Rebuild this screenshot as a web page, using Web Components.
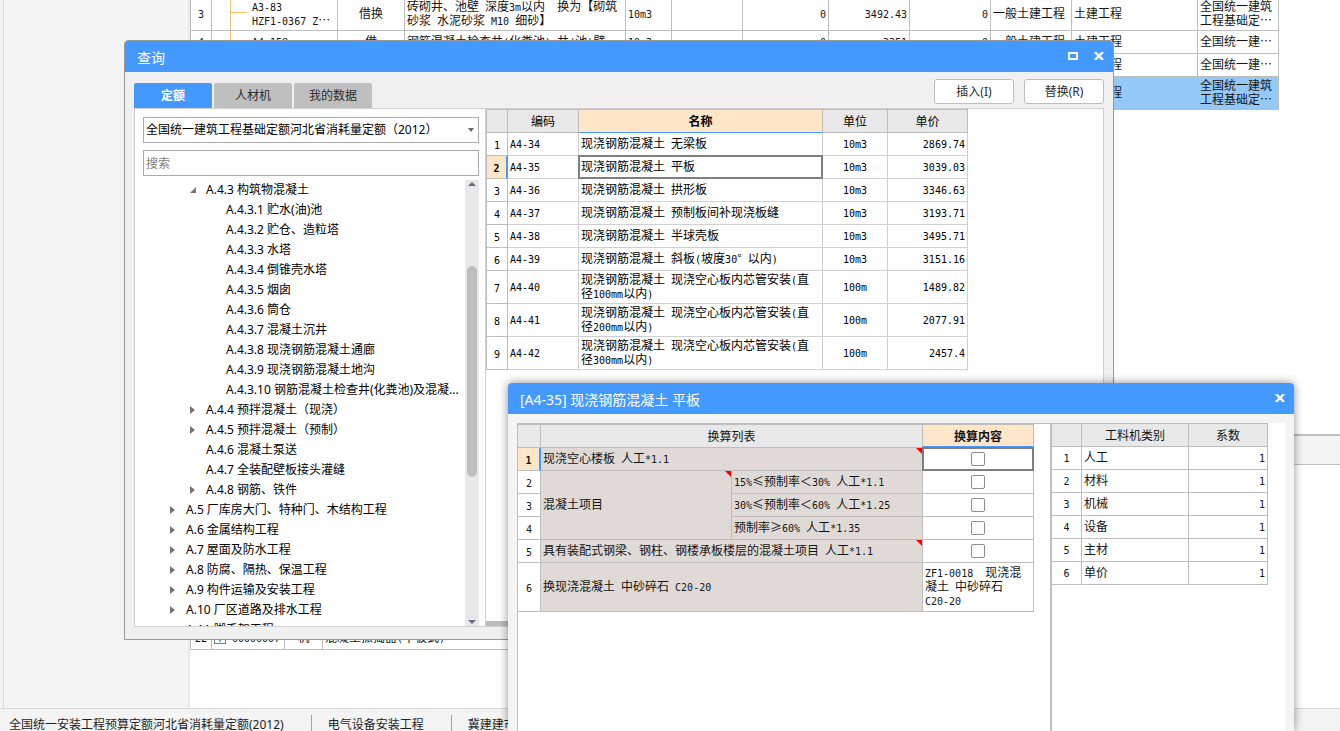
<!DOCTYPE html>
<html lang="zh-CN">
<head>
<meta charset="utf-8">
<title>查询</title>
<style>
html,body{margin:0;height:100%;overflow:hidden}
body{font:12px/14px "Noto Sans","Noto Sans CJK SC",sans-serif;color:#1e1e1e;text-spacing-trim:space-all;background:#fff}
cost-workspace{height:100%}
.query{inset:40px 226px 91px 124px}
.convert{inset:383px 46px 0 508px}
</style>
</head>
<body>

<template id="sheet-main">
<table>
<colgroup><col style="width:21px"><col style="width:126px"><col style="width:67px"><col style="width:221px"><col style="width:46px"><col style="width:71px"><col style="width:86px"><col style="width:81px"><col style="width:81px"><col style="width:81px"><col style="width:126px"><col style="width:81px"></colgroup>
<tr class="h2"><td class="c">3</td><td class="branch leaf">A3-83
HZF1-0367 Z…</td><td class="c">借换</td><td>砖砌井、池壁 深度3m以内  换为【砌筑
砂浆 水泥砂浆 M10 细砂】</td><td>10m3</td><td></td><td class="r">0</td><td class="r">3492.43</td><td class="r">0</td><td>一般土建工程</td><td>土建工程</td><td>全国统一建筑
工程基础定…</td></tr>
<tr><td class="c">4</td><td class="branch">A4-158</td><td class="c">借</td><td>钢筋混凝土检查井(化粪池) 井(池)壁</td><td>10m3</td><td></td><td class="r">0</td><td class="r">3351</td><td class="r">0</td><td>一般土建工程</td><td>土建工程</td><td>全国统一建…</td></tr>
<tr><td class="c"></td><td></td><td></td><td></td><td></td><td></td><td></td><td></td><td></td><td></td><td>土建工程</td><td>全国统一建…</td></tr>
<tr class="h2 picked"><td class="c"></td><td></td><td></td><td></td><td></td><td></td><td></td><td></td><td></td><td></td><td>土建工程</td><td>全国统一建筑
工程基础定…</td></tr>
</table>
</template>

<template id="sheet-detail">
<table>
<colgroup><col style="width:21px"><col style="width:73px"><col style="width:38px"><col style="width:956px"></colgroup>
<tr><td class="c">22</td><td><span class="plus">+</span>00000007</td><td class="c">机</td><td>混凝土振捣器(平板式)</td></tr>
</table>
</template>

<template id="sheet-quota">
<table class="soft">
<colgroup><col style="width:21px"><col style="width:71px"><col style="width:244px"><col style="width:65px"><col style="width:80px"></colgroup>
<tr><th></th><th>编码</th><th class="on thin">名称</th><th>单位</th><th>单价</th></tr>
<tr><td class="n">1</td><td>A4-34</td><td>现浇钢筋混凝土 无梁板</td><td class="c">10m3</td><td class="r">2869.74</td></tr>
<tr><td class="n cur">2</td><td>A4-35</td><td class="focus">现浇钢筋混凝土 平板</td><td class="c">10m3</td><td class="r">3039.03</td></tr>
<tr><td class="n">3</td><td>A4-36</td><td>现浇钢筋混凝土 拱形板</td><td class="c">10m3</td><td class="r">3346.63</td></tr>
<tr><td class="n">4</td><td>A4-37</td><td>现浇钢筋混凝土 预制板间补现浇板缝</td><td class="c">10m3</td><td class="r">3193.71</td></tr>
<tr><td class="n">5</td><td>A4-38</td><td>现浇钢筋混凝土 半球壳板</td><td class="c">10m3</td><td class="r">3495.71</td></tr>
<tr><td class="n">6</td><td>A4-39</td><td>现浇钢筋混凝土 斜板(坡度30° 以内)</td><td class="c">10m3</td><td class="r">3151.16</td></tr>
<tr class="h2"><td class="n">7</td><td>A4-40</td><td>现浇钢筋混凝土 现浇空心板内芯管安装(直
径100mm以内)</td><td class="c">100m</td><td class="r">1489.82</td></tr>
<tr class="h2"><td class="n">8</td><td>A4-41</td><td>现浇钢筋混凝土 现浇空心板内芯管安装(直
径200mm以内)</td><td class="c">100m</td><td class="r">2077.91</td></tr>
<tr class="h2"><td class="n">9</td><td>A4-42</td><td>现浇钢筋混凝土 现浇空心板内芯管安装(直
径300mm以内)</td><td class="c">100m</td><td class="r">2457.4</td></tr>
</table>
</template>

<template id="sheet-convert">
<table>
<colgroup><col style="width:23px"><col style="width:191px"><col style="width:191px"><col style="width:111px"></colgroup>
<tr><th></th><th colspan="2">换算列表</th><th class="on">换算内容</th></tr>
<tr><td class="n cur">1</td><td colspan="2" class="g flag">现浇空心楼板 人工*1.1</td><td class="n focus"><input type="checkbox" aria-label="现浇空心楼板"></td></tr>
<tr><td class="n">2</td><td rowspan="3" class="g flag">混凝土项目</td><td class="g">15%≤预制率＜30% 人工*1.1</td><td class="n"><input type="checkbox" aria-label="15%≤预制率＜30%"></td></tr>
<tr><td class="n">3</td><td class="g">30%≤预制率＜60% 人工*1.25</td><td class="n"><input type="checkbox" aria-label="30%≤预制率＜60%"></td></tr>
<tr><td class="n">4</td><td class="g">预制率≥60% 人工*1.35</td><td class="n"><input type="checkbox" aria-label="预制率≥60%"></td></tr>
<tr><td class="n">5</td><td colspan="2" class="g flag">具有装配式钢梁、钢柱、钢楼承板楼层的混凝土项目 人工*1.1</td><td class="n"><input type="checkbox" aria-label="具有装配式钢梁"></td></tr>
<tr class="h3"><td class="n">6</td><td colspan="2" class="g">换现浇混凝土 中砂碎石 C20-20</td><td>ZF1-0018  现浇混
凝土 中砂碎石
C20-20</td></tr>
</table>
</template>

<template id="sheet-factor">
<table>
<colgroup><col style="width:30px"><col style="width:107px"><col style="width:79px"></colgroup>
<tr><th></th><th>工料机类别</th><th>系数</th></tr>
<tr><td class="c">1</td><td>人工</td><td class="r">1</td></tr>
<tr><td class="c">2</td><td>材料</td><td class="r">1</td></tr>
<tr><td class="c">3</td><td>机械</td><td class="r">1</td></tr>
<tr><td class="c">4</td><td>设备</td><td class="r">1</td></tr>
<tr><td class="c">5</td><td>主材</td><td class="r">1</td></tr>
<tr><td class="c">6</td><td>单价</td><td class="r">1</td></tr>
</table>
</template>

<cost-workspace>
  <data-grid slot="upper" sheet="sheet-main"></data-grid>
  <data-grid slot="lower" sheet="sheet-detail"></data-grid>
  <status-bar slot="status"></status-bar>
</cost-workspace>

<tool-window class="query" heading="查询" maximizable framed>
  <query-panel></query-panel>
</tool-window>

<tool-window class="convert" heading="[A4-35] 现浇钢筋混凝土 平板">
  <convert-panel></convert-panel>
</tool-window>

<script>
class Part extends HTMLElement{
  connectedCallback(){
    if(this.shadowRoot) return;
    this.attachShadow({mode:'open'}).innerHTML=this.view();
    this.ready&&this.ready();
  }
}

customElements.define('cost-workspace',class extends Part{
  view(){return `<style>
:host{display:flex;flex-direction:column;overflow:hidden}
.top{flex:1;display:flex;min-height:0}
.edge{width:3px;background:#f4f4f4;border-right:1px solid #d9d9d9}
aside{width:184px;background:#f4f4f4;border-right:2px solid #e9e9e9;flex:none}
main{flex:1;min-width:0;display:flex;flex-direction:column}
.upper,.lower{overflow:hidden;min-height:0}
.upper{flex:433 1 0}
main ::slotted(*){border-left:1px solid #bebebe}
.upper ::slotted(*){margin-top:-2px}
.bar{height:28px;background:#f4f4f4;border-top:2px solid #bebebe;border-bottom:1px solid #bebebe}
.lower{flex:243 1 0;display:flex;flex-direction:column;justify-content:flex-end}
.lower ::slotted(*){margin-bottom:58px}
</style><div class="top"><div class="edge"></div><aside></aside><main><section class="upper"><slot name="upper"></slot></section><div class="bar"></div><section class="lower"><slot name="lower"></slot></section></main></div><slot name="status"></slot>`}
});

customElements.define('status-bar',class extends Part{
  view(){return `<style>
:host{display:block;height:22px;background:#f4f4f4;border-top:1px solid #d9d9d9;overflow:hidden;flex:none}
footer{display:flex;padding:6px 0 0 9px;white-space:nowrap}
span{line-height:14px;padding:3px 27px 0 0;margin-right:16px;border-right:1px solid #9aa3b2}
span:last-child{border:0}
</style><footer><span>全国统一安装工程预算定额河北省消耗量定额(2012)</span><span>电气设备安装工程</span><span>冀建建市</span></footer>`}
});

customElements.define('data-grid',class extends Part{
  view(){return `<style>
:host{display:block;--line:#bebebe}
table{border-collapse:separate;border-spacing:0;table-layout:fixed;width:0;color:#141414;font-family:"Noto Sans CJK SC",sans-serif;white-space:pre}
tr{height:23px}.h2{height:33px}.h3{height:49px}
td,th{box-sizing:border-box;padding:0 2px;border:0 solid var(--line);border-width:0 1px 1px 0;text-align:left;position:relative;overflow:hidden;font-weight:400;line-height:14px}
td{padding-bottom:2px}
td:first-child,th:first-child{border-color:#bebebe}
.soft{--line:#d0d0d0;color:#000}
th{background:#e8e8e8;text-align:center;border-color:#bebebe}
th.on{background:#ffe6c8;font-weight:700;border-bottom:2px solid #4499ff}
th.thin{border-bottom-width:1px}
.c{text-align:center;padding:0 0 2px}.n{text-align:center;padding:0}.r{text-align:right}
.cur{background:#ffe6c8;font-weight:700;border-right:2px solid #4499ff!important}
.focus{overflow:visible}
.focus::after{content:"";position:absolute;inset:-1px;border:2px solid #7f7f7f;pointer-events:none}
.g{background:#e0dad7}
.flag::after{content:"";position:absolute;top:0;right:0;border:3px solid red;border-left-color:transparent;border-bottom-color:transparent}
.picked td{background:#93c8f7}
td.branch{padding-left:40px}
.branch::before{content:"";position:absolute;left:18px;top:0;bottom:0;border-left:1px solid #f8c070}
.leaf::after{content:"";position:absolute;left:19px;top:14px;width:16px;border-top:1px solid #f8c070}
.plus{display:inline-block;box-sizing:border-box;width:12px;height:12px;border:1px solid #7f7f7f;line-height:10px;margin-right:6px;text-align:center;vertical-align:middle}
.half{font-family:"DejaVu Sans Mono",monospace;font-size:10px;line-height:10px}
input{appearance:none;display:block;width:14px;height:14px;box-sizing:border-box;margin:0 auto;border:1px solid #8c8c8c;border-radius:2px;background:#fff}
</style>`}
  ready(){
    const body=document.getElementById(this.getAttribute('sheet')).content.cloneNode(true);
    const walk=document.createTreeWalker(body,NodeFilter.SHOW_TEXT),found=[];
    while(walk.nextNode()) if(walk.currentNode.parentElement?.closest('td')) found.push(walk.currentNode);
    for(const node of found){
      const parts=node.data.split(/([\x20-\x7e]+)/).filter(Boolean).map(s=>{
        if(!/^[\x20-\x7e]+$/.test(s)) return s;
        const e=document.createElement('span');e.className='half';e.textContent=s;return e;
      });
      node.replaceWith(...parts);
    }
    this.shadowRoot.append(body);
  }
});

customElements.define('tool-window',class extends Part{
  view(){return `<style>
:host{position:absolute;display:flex;flex-direction:column;border-radius:4px 4px 0 0;overflow:hidden;background:#f4f4f4;box-shadow:0 0 10px rgba(0,0,0,.45)}
:host([framed]){border:1px solid #999;background:#f0f0f0;box-shadow:none}
header{display:flex;align-items:center;height:31px;flex:none;background:#4499ff;color:#fff;padding:0 9px 0 12px;gap:16px}
h2{font-size:14px;line-height:20px;font-weight:400;margin:2px auto 0 0}
button{border:0;background:none;padding:0 0 1px;width:10px;height:9px;display:block;color:inherit}
svg{display:block}
</style><header><h2>${this.getAttribute('heading')}</h2>
${this.hasAttribute('maximizable')?'<button aria-label="最大化"><svg width="10" height="8" fill="none" stroke="currentColor" stroke-width="2"><path d="M1 1H9V7H1Z"/></svg></button>':''}
<button aria-label="关闭"><svg width="10" height="8" fill="none" stroke="currentColor" stroke-width="2.4"><path d="M1 0L9 8M9 0L1 8"/></svg></button></header><slot></slot>`}
});

const TREE=[[2,'open','A.4.3 构筑物混凝土'],[3,'','A.4.3.1 贮水(油)池'],[3,'','A.4.3.2 贮仓、造粒塔'],[3,'','A.4.3.3 水塔'],[3,'','A.4.3.4 倒锥壳水塔'],[3,'','A.4.3.5 烟囱'],[3,'','A.4.3.6 筒仓'],[3,'','A.4.3.7 混凝土沉井'],[3,'','A.4.3.8 现浇钢筋混凝土通廊'],[3,'','A.4.3.9 现浇钢筋混凝土地沟'],[3,'','A.4.3.10 钢筋混凝土检查井(化粪池)及混凝...'],[2,'shut','A.4.4 预拌混凝土（现浇）'],[2,'shut','A.4.5 预拌混凝土（预制）'],[2,'','A.4.6 混凝土泵送'],[2,'','A.4.7 全装配壁板接头灌缝'],[2,'shut','A.4.8 钢筋、铁件'],[1,'shut','A.5 厂库房大门、特种门、木结构工程'],[1,'shut','A.6 金属结构工程'],[1,'shut','A.7 屋面及防水工程'],[1,'shut','A.8 防腐、隔热、保温工程'],[1,'shut','A.9 构件运输及安装工程'],[1,'shut','A.10 厂区道路及排水工程'],[1,'shut','A.11 脚手架工程']];

customElements.define('quota-tree',class extends Part{
  view(){
    const icon={open:'<svg width="6" height="6"><path d="M6 0V6H0Z" fill="#757575"/></svg>',shut:'<svg width="5" height="8"><path d="M0 0L5 4L0 8Z" fill="#757575"/></svg>','':''};
    return `<style>
:host{display:flex;overflow:hidden;color:#000}
ul{flex:1;min-width:0;margin:0;padding:0;list-style:none;white-space:nowrap}
li{display:flex;align-items:center;height:20px;padding-left:calc(var(--level)*20px + 7px)}
i{width:16px;height:8px;display:flex;align-items:center;flex:none}
.track{width:14px;background:#e8e8e8;display:flex;flex-direction:column;align-items:center;padding:2px 0;flex:none}
.thumb{flex:209 1 0;width:10px;border-radius:5px;background:#bfbfbf}
.before{flex:79 1 0}.after{flex:142 1 0}
svg{display:block}
</style><ul role="tree">${TREE.map(([l,s,t])=>`<li role="treeitem" style="--level:${l}"><i>${icon[s]}</i>${t}</li>`).join('')}</ul>
<div class="track"><svg width="8" height="4"><path d="M0 4L4 0L8 4Z" fill="#666a78"/></svg><div class="before"></div><div class="thumb"></div><div class="after"></div><svg width="8" height="4"><path d="M0 0L4 4L8 0Z" fill="#666a78"/></svg></div>`}
});

customElements.define('query-panel',class extends Part{
  view(){return `<style>
:host{flex:1;min-height:0;display:flex;flex-direction:column;padding:0 9px 12px}
.tools{height:36px;display:flex;align-items:flex-end;flex:none}
.tabs{display:flex;gap:2px;margin-right:auto}
button{font:inherit;color:#2b2b2b;padding:0}
.tabs button{width:78px;height:25px;border:0;border-radius:2px 2px 0 0;background:#bfbfbf}
.tabs [aria-selected=true]{background:#4499ff;color:#fff;font-weight:700}
.acts{display:flex;gap:10px;padding-bottom:4px}
.acts button{width:80px;height:25px;border:1px solid #bebebe;border-radius:3px;background:#fff}
.panel{flex:1;min-height:0;display:flex;border:1px solid #d0d0d0;background:#fff}
.left{width:336px;flex:none;display:flex;flex-direction:column;padding:8px 6px 0 8px;border-right:1px solid #d0d0d0}
.pick{position:relative;margin-bottom:7px}
.pick svg{position:absolute;right:5px;top:11px}
select,input{appearance:none;display:block;box-sizing:border-box;width:100%;height:26px;border:1px solid #ababab;border-radius:0;background:#fff;font:inherit;color:#000;padding:0 2px;margin:0;outline:0}
input::placeholder{color:#808080;opacity:1}
quota-tree{flex:1;min-height:0;margin-top:4px}
.right{flex:1;min-width:0;display:flex;flex-direction:column;overflow:hidden}
data-grid{align-self:flex-start;border:1px solid #bebebe;border-width:1px 0 0 1px}
.scroll{margin-top:auto;width:480px;height:5px;background:#bdbdbd}
</style>
<div class="tools"><div class="tabs" role="tablist"><button role="tab" aria-selected="true">定额</button><button role="tab">人材机</button><button role="tab">我的数据</button></div><div class="acts"><button>插入(I)</button><button>替换(R)</button></div></div>
<div class="panel"><div class="left"><div class="pick"><select aria-label="定额库"><option>全国统一建筑工程基础定额河北省消耗量定额（2012）</option></select><svg width="6" height="4"><path d="M0 0H6L3 4Z" fill="#666"/></svg></div><input type="text" placeholder="搜索" aria-label="搜索"><quota-tree></quota-tree></div>
<div class="right"><data-grid sheet="sheet-quota"></data-grid><div class="scroll"></div></div></div>`}
});

customElements.define('convert-panel',class extends Part{
  view(){return `<style>
:host{flex:1;min-height:0;display:flex;margin:9px 9px 0;background:#fff}
section{box-sizing:border-box;overflow:hidden;border-top:1px solid #bebebe}
.list{flex:1;border-left:1px solid #bebebe}
.list data-grid{width:516px;border-top:1px solid #bebebe}
.factor{width:235px;flex:none;border-left:2px solid #bebebe;border-top:0}
.factor data-grid{width:216px;border-top:1px solid #bebebe}
</style><section class="list"><data-grid sheet="sheet-convert"></data-grid></section><section class="factor"><data-grid sheet="sheet-factor"></data-grid></section>`}
});
</script>
</body>
</html>
